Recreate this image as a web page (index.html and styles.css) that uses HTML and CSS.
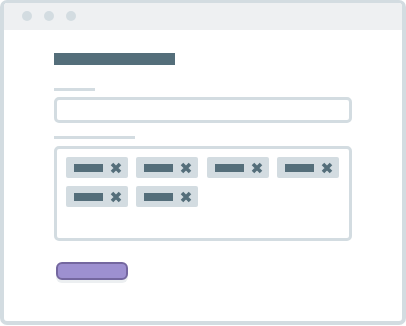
FILE: index.html
```html
<!DOCTYPE html>
<html>
<head>
<meta charset="utf-8">
<link rel="stylesheet" href="styles.css">
</head>
<body>
<div class="window">
  <div class="titlebar">
    <span class="dot"></span><span class="dot"></span><span class="dot"></span>
  </div>
  <div class="content">
    <div class="heading"></div>
    <div class="label label-short"></div>
    <div class="input"></div>
    <div class="label label-long"></div>
    <div class="tagbox">
      <div class="tag"><span class="tag-text"></span><svg class="x" width="12" height="12" viewBox="0 0 12 12"><path d="M2 2L10 10M10 2L2 10" stroke="#546e7a" stroke-width="3.6" fill="none"/></svg></div>
      <div class="tag"><span class="tag-text"></span><svg class="x" width="12" height="12" viewBox="0 0 12 12"><path d="M2 2L10 10M10 2L2 10" stroke="#546e7a" stroke-width="3.6" fill="none"/></svg></div>
      <div class="tag"><span class="tag-text"></span><svg class="x" width="12" height="12" viewBox="0 0 12 12"><path d="M2 2L10 10M10 2L2 10" stroke="#546e7a" stroke-width="3.6" fill="none"/></svg></div>
      <div class="tag"><span class="tag-text"></span><svg class="x" width="12" height="12" viewBox="0 0 12 12"><path d="M2 2L10 10M10 2L2 10" stroke="#546e7a" stroke-width="3.6" fill="none"/></svg></div>
      <div class="tag"><span class="tag-text"></span><svg class="x" width="12" height="12" viewBox="0 0 12 12"><path d="M2 2L10 10M10 2L2 10" stroke="#546e7a" stroke-width="3.6" fill="none"/></svg></div>
      <div class="tag"><span class="tag-text"></span><svg class="x" width="12" height="12" viewBox="0 0 12 12"><path d="M2 2L10 10M10 2L2 10" stroke="#546e7a" stroke-width="3.6" fill="none"/></svg></div>
    </div>
    <div class="button"></div>
  </div>
</div>
</body>
</html>
```
FILE: styles.css
```css
* { box-sizing: border-box; }
html, body { margin: 0; padding: 0; background: #ffffff; font-family: "Liberation Sans", sans-serif; }
.window {
  width: 406px;
  height: 325px;
  border: 4px solid #d3dce1;
  border-top-width: 3px;
  border-radius: 7px;
  background: #ffffff;
  display: flex;
  flex-direction: column;
  overflow: hidden;
}
.titlebar {
  height: 27px;
  background: #eef0f2;
  display: flex;
  align-items: center;
  gap: 12px;
  padding-left: 18px;
  padding-bottom: 1px;
}
.dot {
  width: 10px;
  height: 10px;
  border-radius: 50%;
  background: #d3dce1;
}
.content {
  padding-left: 50px;
  display: flex;
  flex-direction: column;
  align-items: flex-start;
}
.heading {
  margin-top: 23px;
  width: 121px;
  height: 12px;
  background: #546e7a;
}
.label {
  height: 3px;
  background: #d3dce1;
}
.label-short { width: 41px; margin-top: 23px; }
.label-long { width: 81px; margin-top: 13px; }
.input {
  margin-top: 6px;
  width: 298px;
  height: 26px;
  border: 3px solid #d3dce1;
  border-radius: 5px;
}
.tagbox {
  margin-top: 7px;
  width: 298px;
  height: 95px;
  border: 3px solid #d3dce1;
  border-radius: 5px;
  padding: 8px 0 0 9px;
  display: flex;
  flex-wrap: wrap;
  align-content: flex-start;
  column-gap: 8.33px;
  row-gap: 8px;
}
.tag {
  width: 62px;
  height: 21px;
  background: #d3dce1;
  border-radius: 2px;
  display: flex;
  align-items: center;
  padding-left: 8px;
}
.tag-text {
  width: 29px;
  height: 8px;
  background: #546e7a;
}
.x { margin-left: 7px; }
.button {
  margin-top: 21px;
  margin-left: 2px;
  width: 72px;
  height: 18px;
  border: 2px solid #74679f;
  border-radius: 6px;
  background: #9d90d0;
  box-shadow: 0 3px 0 #eceff1;
}
```
